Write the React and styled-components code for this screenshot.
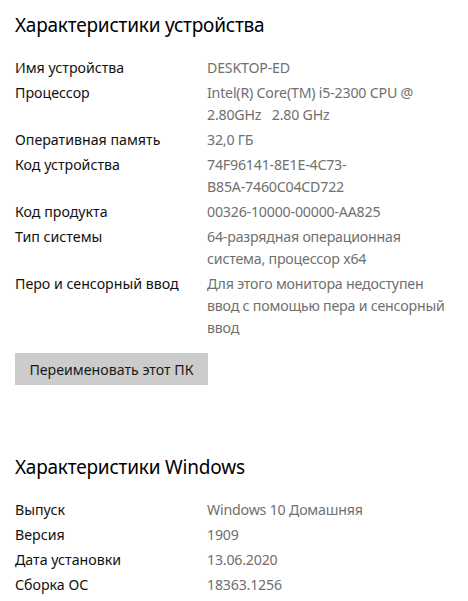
import React from "react";
import styled, { createGlobalStyle } from "styled-components";

const GlobalStyle = createGlobalStyle`
  body {
    margin: 0;
    background: #ffffff;
    font-family: "Noto Sans", "Open Sans", sans-serif;
  }
`;

const Page = styled.main`
  padding: 10px 15px 0 15px;
`;

const SectionTitle = styled.h2`
  margin: ${(props) => (props.$first ? "0" : "67px 0 0 0")};
  font-size: 19px;
  font-weight: 400;
  line-height: 30px;
  color: #000;
  letter-spacing: -0.2px;
`;

const SpecList = styled.dl`
  display: grid;
  grid-template-columns: 192px 1fr;
  row-gap: 3px;
  margin: 17px 0 0 0;
  font-size: 14.2px;
  line-height: 22px;
`;

const Label = styled.dt`
  margin: 0;
  color: #111;
`;

const Value = styled.dd`
  margin: 0;
  color: #707070;
  white-space: pre;
  letter-spacing: -0.2px;
`;

const RenameButton = styled.button`
  margin-top: 14px;
  width: 193px;
  height: 32px;
  border: none;
  background: #cccccc;
  color: #1a1a1a;
  font-family: inherit;
  font-size: 14.2px;
  padding: 0;
  cursor: pointer;
`;

const deviceSpecs = [
  { label: "Имя устройства", value: ["DESKTOP-ED"] },
  {
    label: "Процессор",
    value: ["Intel(R) Core(TM) i5-2300 CPU @", "2.80GHz   2.80 GHz"],
  },
  { label: "Оперативная память", value: ["32,0 ГБ"] },
  { label: "Код устройства", value: ["74F96141-8E1E-4C73-", "B85A-7460C04CD722"] },
  { label: "Код продукта", value: ["00326-10000-00000-AA825"] },
  {
    label: "Тип системы",
    value: ["64-разрядная операционная", "система, процессор x64"],
  },
  {
    label: "Перо и сенсорный ввод",
    value: [
      "Для этого монитора недоступен",
      "ввод с помощью пера и сенсорный",
      "ввод",
    ],
  },
];

const windowsSpecs = [
  { label: "Выпуск", value: ["Windows 10 Домашняя"] },
  { label: "Версия", value: ["1909"] },
  { label: "Дата установки", value: ["13.06.2020"] },
  { label: "Сборка ОС", value: ["18363.1256"] },
];

function Specs({ items }) {
  return (
    <SpecList>
      {items.map((item) => (
        <React.Fragment key={item.label}>
          <Label>{item.label}</Label>
          <Value>{item.value.join("\n")}</Value>
        </React.Fragment>
      ))}
    </SpecList>
  );
}

export default function App() {
  return (
    <>
      <GlobalStyle />
      <Page>
        <SectionTitle $first>Характеристики устройства</SectionTitle>
        <Specs items={deviceSpecs} />
        <RenameButton>Переименовать этот ПК</RenameButton>

        <SectionTitle>Характеристики Windows</SectionTitle>
        <Specs items={windowsSpecs} />
      </Page>
    </>
  );
}
